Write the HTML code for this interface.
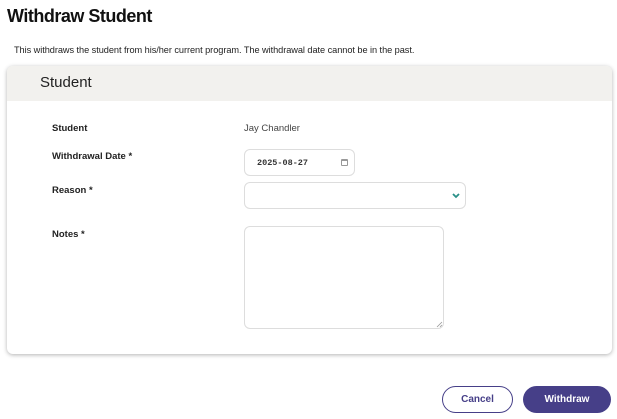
<!DOCTYPE html>
<html><head><style>
*{box-sizing:border-box;margin:0;padding:0}
body{width:617px;height:419px;background:#fff;font-family:"Liberation Sans",sans-serif;position:relative;overflow:hidden;color:#222}
.a{position:absolute}
h1{position:absolute;left:7px;top:6px;font-size:18px;font-weight:bold;color:#111;letter-spacing:-0.5px}
.desc{left:14px;top:45px;font-size:9.2px;color:#222;letter-spacing:-0.05px}
.card{left:7px;top:66px;width:605px;height:288px;border-radius:6px;background:#fff;box-shadow:0 1px 4px rgba(0,0,0,.3);overflow:hidden}
.hd{left:0;top:0;width:605px;height:35px;background:#f2f1ee}
.hd span{position:absolute;left:33px;top:8px;font-size:15px;color:#222}
.lb{font-size:9.5px;font-weight:bold;color:#222}
.box{border:1px solid #ddd;border-radius:6px;background:#fff}
.btn{border-radius:14px;font-size:10px;font-weight:bold;text-align:center;line-height:27px}
</style></head><body>
<h1>Withdraw Student</h1>
<div class="a desc">This withdraws the student from his/her current program. The withdrawal date cannot be in the past.</div>
<div class="a card"><div class="a hd"><span>Student</span></div></div>
<div class="a lb" style="left:52px;top:123px">Student</div>
<div class="a" style="left:244px;top:123px;font-size:9.5px;color:#444">Jay Chandler</div>
<div class="a lb" style="left:52px;top:151px">Withdrawal Date *</div>
<div class="a lb" style="left:52px;top:185px">Reason *</div>
<div class="a lb" style="left:52px;top:229px">Notes *</div>
<div class="a box" style="left:244px;top:149px;width:111px;height:27px"><span class="a" style="left:12px;top:8px;font-family:'Liberation Mono',monospace;font-size:8.5px;font-weight:bold;color:#333">2025-08-27</span><span class="a" style="left:96px;top:9px;width:7px;height:7px;border:1px solid #999;border-top-width:2px;border-radius:1px"></span></div>
<div class="a box" style="left:244px;top:182px;width:222px;height:27px"><svg class="a" style="left:206px;top:9px" width="10" height="8" viewBox="0 0 10 8"><path d="M2 2 L5 5 L8 2" stroke="#2a9088" stroke-width="1.8" fill="none"/></svg></div>
<div class="a box" style="left:244px;top:226px;width:200px;height:103px"><svg class="a" style="left:191px;top:94px" width="7" height="7"><path d="M1 6L6 1M4 6L6 4" stroke="#999" stroke-width="0.8"/></svg></div>
<div class="a btn" style="left:442px;top:386px;width:71px;height:27px;border:1px solid #463f88;color:#463f88;line-height:25px">Cancel</div>
<div class="a btn" style="left:523px;top:386px;width:88px;height:27px;background:#463f88;color:#fff">Withdraw</div>
</body></html>
